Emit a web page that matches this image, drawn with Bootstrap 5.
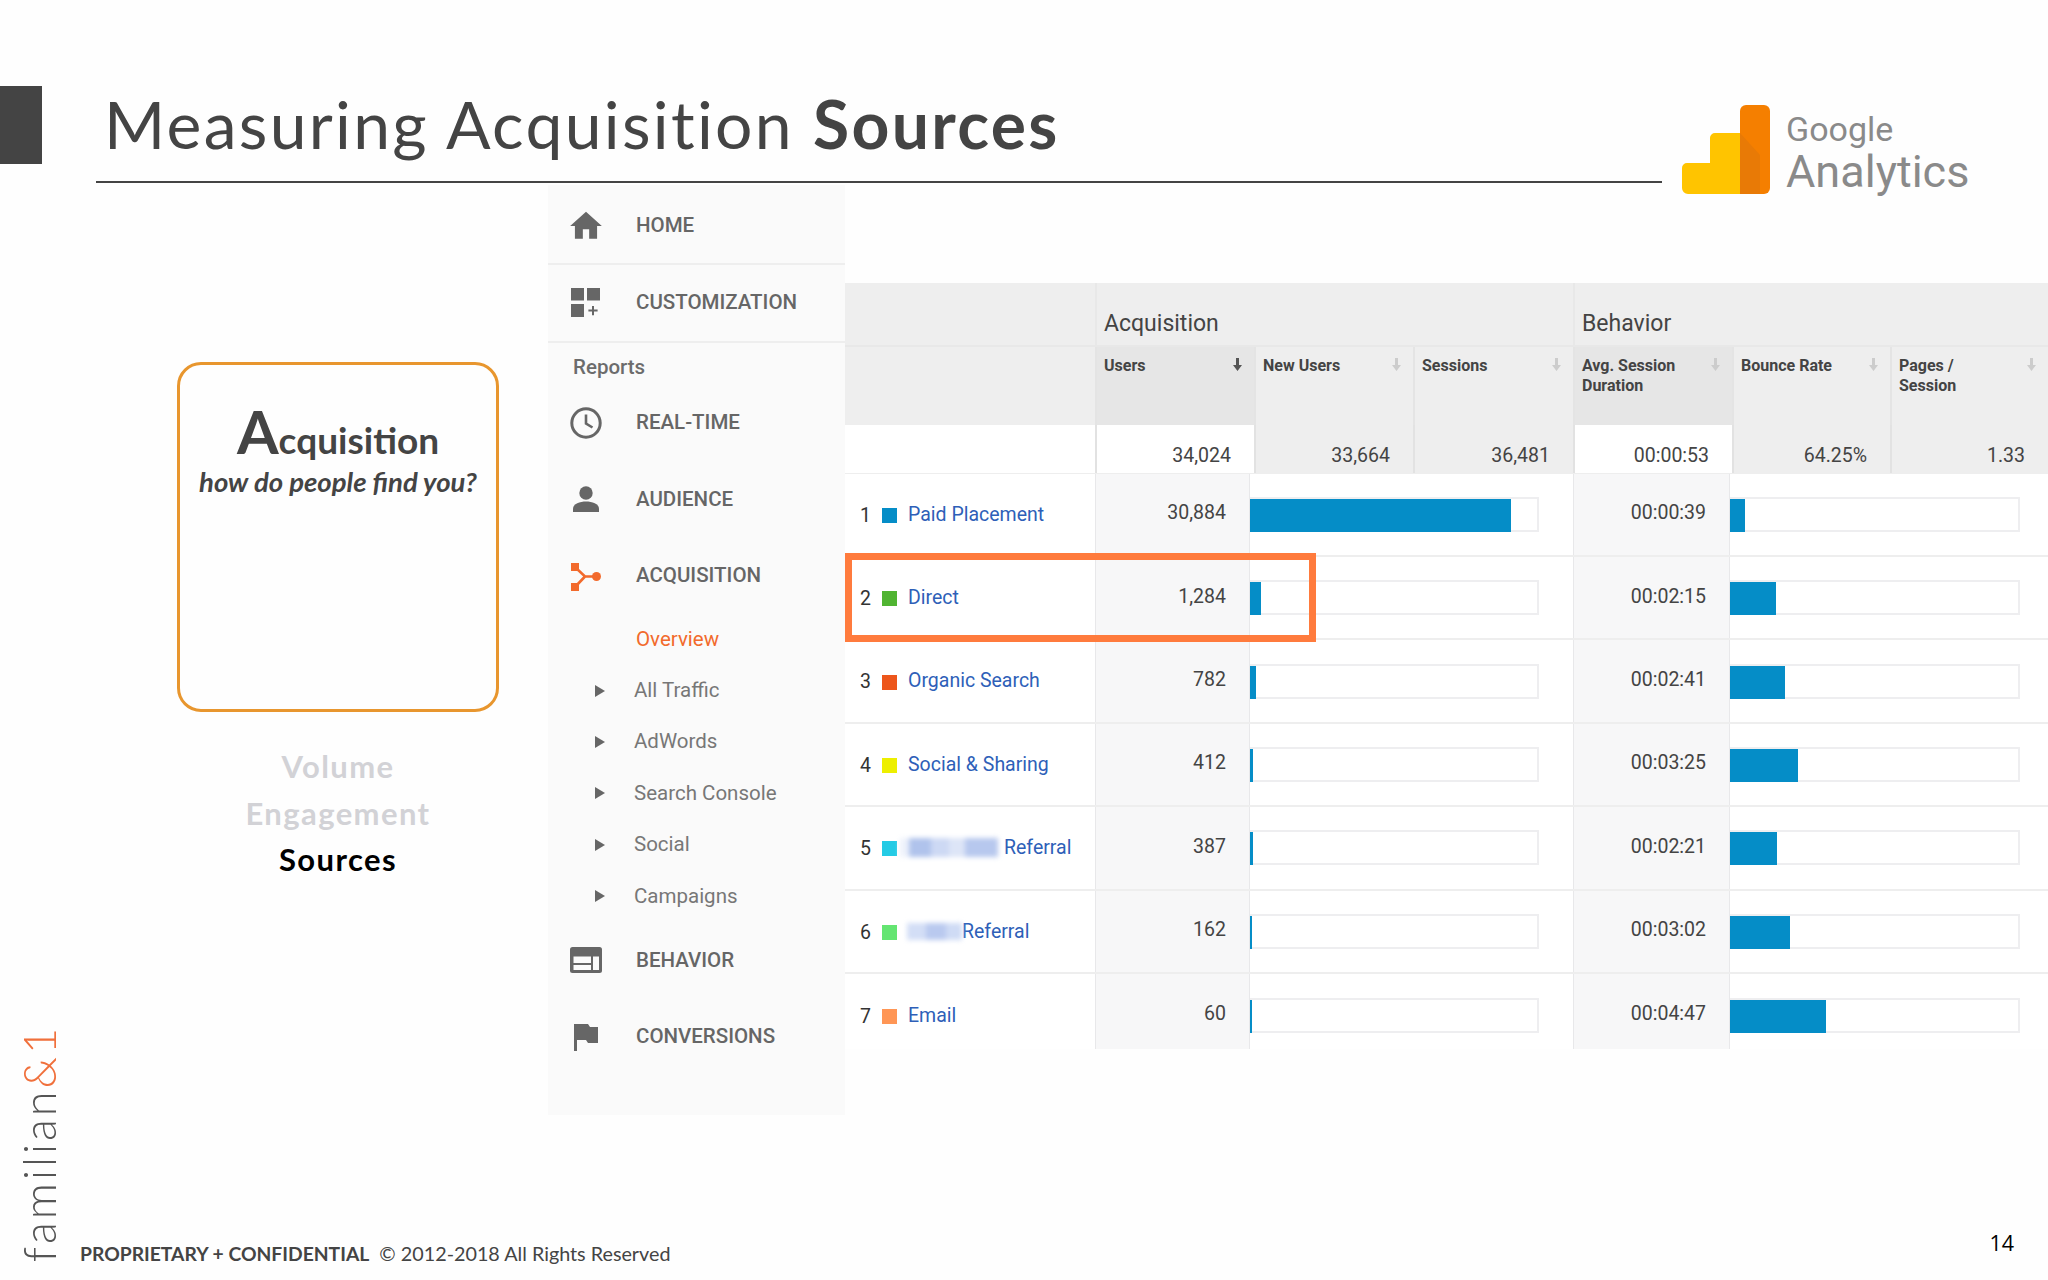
<!DOCTYPE html>
<html lang="en">
<head>
<meta charset="utf-8">
<title>Measuring Acquisition Sources</title>
<link href="https://cdn.jsdelivr.net/npm/bootstrap@5.3.0/dist/css/bootstrap.min.css" rel="stylesheet">
<style>
html,body{margin:0;height:1280px;width:2048px;overflow:hidden;background:#fefefe;}
.slide-strip{width:60px;height:1280px;padding-top:86px;padding-bottom:18px;}
.accent-bar{width:42px;height:78px;background:#444;}
.brand-v{writing-mode:vertical-rl;transform:rotate(180deg);font:300 45px/1 Lato,sans-serif;letter-spacing:3px;color:#555;margin-left:17px;white-space:nowrap;}
.brand-v span{color:#f0703c;}
.slide-main{width:1988px;height:1280px;}
.head-wrap{height:183px;padding-left:36px;}
.title-box{width:1566px;height:183px;border-bottom:2px solid #444;padding-left:8px;padding-top:84px;}
.title-box h1{margin:0;font:400 66px/80px Lato,sans-serif;letter-spacing:2.3px;color:#444;white-space:nowrap;}
.title-box b{font-weight:700;}
.ga-logo{margin-left:20px;margin-top:105px;height:100px;}
.ga-logo-text{margin-left:16px;color:#8a8a8a;font-family:Roboto,sans-serif;padding-top:5px;}
.ga-logo-g{font-size:34px;line-height:38px;letter-spacing:0;}
.ga-logo-a{font-size:45px;line-height:46px;letter-spacing:0;margin-top:1px;}
.left-col{width:488px;padding-top:179px;padding-left:117px;}
.acq-card{width:322px;height:350px;border:3px solid #e8962e;border-radius:24px;text-align:center;padding-top:35px;color:#444;}
.acq-word{font:700 37px/62px Lato,sans-serif;}
.acq-word span{font-size:60px;}
.acq-sub{font:italic 700 27.5px/30px Lato,sans-serif;margin-top:-4px;white-space:nowrap;}
.stage-list{width:322px;margin-top:31px;text-align:center;font:700 31px/46.5px Lato,sans-serif;letter-spacing:1.4px;color:#d2d2d6;}
.stage-on{color:#000;}
.ga-nav{width:297px;height:930px;margin-top:2px;padding-top:3.5px;background:#fafafa;font-family:Roboto,sans-serif;color:#666;}
.ga-item{height:76px;font-size:20.5px;font-weight:500;}
.ga-icon{width:76px;flex:none;}
.ga-icon svg{display:block;margin:0 auto;}
.ga-item-t{height:76px;border-bottom:2px solid #eee;}
.ga-item-t2{height:78px;border-bottom:2px solid #eee;}
.ga-txt{margin-left:12px;}
.ga-reports{height:42px;padding:12px 0 0 25px;font-size:20.5px;font-weight:500;line-height:24px;color:#6c6c6c;}
.ga-h77{height:77px;}
.ga-sub{height:51.35px;font-size:20.5px;color:#777;padding-left:47px;}
.ga-sub svg{width:10px;margin-right:29px;flex:none;}
.ga-sub-on{color:#f26a2c;}
.ga-sub-on span{margin-left:41px;}
.ga-table{width:1203px;margin-top:100px;height:765px;font-family:Roboto,sans-serif;}
.gt-group,.gt-head,.gt-total{display:grid;grid-template-columns:250px 159px 159px 160px 159px 158px 158px;}
.gt-group{height:64px;background:#eee;font-size:23px;color:#444;line-height:48px;border-bottom:2px solid #e8e8e8;}
.gt-group div{padding:17px 0 0 7px;}
.gt-g1{grid-column:2 / span 3;border-left:2px solid #e8e8e8;}
.gt-g2{grid-column:5 / span 3;border-left:2px solid #e8e8e8;}
.gt-head{height:78px;background:#eee;}
.gt-head>div{padding:9px 12px 0 7px;font-size:16px;line-height:20px;font-weight:700;color:#444;border-left:2px solid #e4e4e4;}
.gt-head>div:first-child{border:0;}
.gt-head>.gt-sorted{background:#e6e6e6;}
.gt-arrow{width:9px;height:13px;flex:none;margin-top:2px;}
.gt-total{height:48.5px;background:#eee;border-bottom:1px solid #eee;font-size:19.5px;line-height:24px;color:#444;text-align:right;}
.gt-total>div{padding:19px 23px 0 0;border-left:2px solid #e2e2e2;}
.gt-total>div:first-child{border:0;background:#fff;}
.gt-total>.gt-white{background:#fff;}
.gt-row{display:grid;grid-template-columns:250px 155px 323px 157px 318px;height:83.45px;border-bottom:2px solid #eee;background:#fff;font-size:19.5px;color:#444;}
.gt-row-last{border-bottom:0;height:75px;}
.gt-dim{padding-left:15px;color:#333;}
.gt-num{width:22px;margin-top:2px;}
.gt-sq{width:15px;height:15px;margin-right:11px;margin-top:2px;flex:none;}
.gt-dim a{color:#2e5fb8;text-decoration:none;white-space:nowrap;}
.gt-val{background:#f7f7f8;border-left:1px solid #e8e8ea;border-right:1px solid #e8e8ea;text-align:right;padding-right:23px;padding-bottom:3px;}
.gt-val2{padding-right:23px;}
.gt-bar-cell{padding-right:34px;}
.gt-bar-cell2{padding-right:28px;}
.gt-row-last .gt-bar-cell,.gt-row-last .gt-bar-cell2,.gt-row-last .gt-dim,.gt-row-last .gt-val{padding-top:7px;}
.gt-track{height:35px;width:100%;border:2px solid #eeeef0;border-left:0;border-radius:0;background:#fff;overflow:visible;}
.gt-track .progress-bar{background:#058dc7;height:33px;}
.gt-blur{height:19px;background:linear-gradient(90deg,#eef2fb 0 9%,#b0c3ec 9% 32%,#cdd9f4 32% 50%,#dde5f7 50% 66%,#b7c8ee 66% 100%);filter:blur(2.5px);margin-right:6px;flex:none;}
.gt-b5{width:98px;margin-left:3px;}
.gt-b6{width:55px;height:17px;margin-right:0;background:linear-gradient(90deg,#d3def6 0 35%,#b9c9ef 35% 70%,#cfdbf5 70% 100%);margin-left:-1px;}
.gt-highlight{position:absolute;left:0;top:270px;width:471px;height:89px;border:7px solid #ff7b3d;pointer-events:none;}
.foot-line{height:43px;padding-left:20px;padding-right:34px;}
.foot-txt{font:400 19.75px/1 Lato,sans-serif;color:#444;padding-top:7px;}
.foot-txt b{font-size:19.3px;font-weight:700;margin-right:5px;}
.page-no{font:400 21.5px/1 "Open Sans",sans-serif;color:#000;margin-top:-5px;}
</style>
</head>
<body>
<div class="d-flex">
  <div class="slide-strip d-flex flex-column justify-content-between flex-none">
    <div class="accent-bar"></div>
    <div class="brand-v">familian<span>&amp;1</span></div>
  </div>
  <div class="slide-main d-flex flex-column">
    <header class="head-wrap d-flex align-items-start">
      <div class="title-box"><h1>Measuring Acquisition <b>Sources</b></h1></div>
      <div class="ga-logo d-flex">
        <svg width="88" height="89" viewBox="0 0 88 89"><path fill="#ffc400" d="M5 58H28V33a5 5 0 0 1 5-5H58V89H6a6 6 0 0 1-6-6V63a5 5 0 0 1 5-5z"/><path fill="#f57f00" d="M58 6a6 6 0 0 1 6-6h18a6 6 0 0 1 6 6v77a6 6 0 0 1-6 6H58z"/><path fill="#e87a06" d="M58 28L78 50V89H58z"/></svg>
        <div class="ga-logo-text"><div class="ga-logo-g">Google</div><div class="ga-logo-a">Analytics</div></div>
      </div>
    </header>
    <div class="d-flex flex-grow-1">
      <section class="left-col">
        <div class="acq-card">
          <div class="acq-word"><span>A</span>cquisition</div>
          <div class="acq-sub">how do people find you?</div>
        </div>
        <div class="stage-list"><div>Volume</div><div>Engagement</div><div class="stage-on">Sources</div></div>
      </section>
      <nav class="ga-nav">
        <div class="ga-item ga-item-t d-flex align-items-center"><div class="ga-icon"><svg width="38" height="38" viewBox="0 0 24 24" fill="#666"><path d="M10 20v-6h4v6h5v-8h3L12 3 2 12h3v8z"/></svg></div><div class="ga-txt">HOME</div></div>
        <div class="ga-item ga-item-t2 d-flex align-items-center"><div class="ga-icon"><svg width="30" height="30" viewBox="0 0 30 30" fill="#666"><rect x="0" y="0" width="13" height="12.5"/><rect x="16" y="0" width="13" height="12.5"/><rect x="0" y="16" width="13" height="13"/><path d="M21 18h2v3.6h3.6v2H23v3.6h-2v-3.6h-3.6v-2H21z"/></svg></div><div class="ga-txt">CUSTOMIZATION</div></div>
        <div class="ga-reports">Reports</div>
        <div class="ga-item d-flex align-items-center"><div class="ga-icon"><svg width="32" height="32" viewBox="0 0 32 32" fill="none" stroke="#666"><circle cx="16" cy="16" r="14.2" stroke-width="3"/><path d="M16 7.5v9l6.5 4" stroke-width="2.6"/></svg></div><div class="ga-txt">REAL-TIME</div></div>
        <div class="ga-item ga-h77 d-flex align-items-center"><div class="ga-icon"><svg width="28" height="28" viewBox="0 0 28 28" fill="#666"><circle cx="14" cy="8" r="6.7"/><path d="M1 27v-3.5C1 19 8 16.5 14 16.5S27 19 27 23.5V27z"/></svg></div><div class="ga-txt">AUDIENCE</div></div>
        <div class="ga-item d-flex align-items-center"><div class="ga-icon"><svg width="30" height="30" viewBox="0 0 30 30"><rect x="0" y="2" width="8" height="8" fill="#f26a2c"/><rect x="0" y="22" width="8" height="8" fill="#f26a2c"/><circle cx="25.5" cy="15.5" r="4.5" fill="#f26a2c"/><path d="M5 7l9 8.5h10M5 25l9-9.5" fill="none" stroke="#f26a2c" stroke-width="2.6"/></svg></div><div class="ga-txt">ACQUISITION</div></div>
        <div class="ga-sub ga-sub-on d-flex align-items-center"><span>Overview</span></div>
        <div class="ga-sub d-flex align-items-center"><svg height="12" viewBox="0 0 10 12" fill="#666"><path d="M0 0l10 6-10 6z"/></svg><span>All Traffic</span></div>
        <div class="ga-sub d-flex align-items-center"><svg height="12" viewBox="0 0 10 12" fill="#666"><path d="M0 0l10 6-10 6z"/></svg><span>AdWords</span></div>
        <div class="ga-sub d-flex align-items-center"><svg height="12" viewBox="0 0 10 12" fill="#666"><path d="M0 0l10 6-10 6z"/></svg><span>Search Console</span></div>
        <div class="ga-sub d-flex align-items-center"><svg height="12" viewBox="0 0 10 12" fill="#666"><path d="M0 0l10 6-10 6z"/></svg><span>Social</span></div>
        <div class="ga-sub d-flex align-items-center"><svg height="12" viewBox="0 0 10 12" fill="#666"><path d="M0 0l10 6-10 6z"/></svg><span>Campaigns</span></div>
        <div class="ga-item ga-h77 d-flex align-items-center"><div class="ga-icon"><svg width="32" height="26" viewBox="0 0 32 26"><rect width="32" height="26" rx="2.5" fill="#666"/><rect x="3.5" y="9.5" width="17.5" height="6.5" fill="#fafafa"/><rect x="3.5" y="18" width="17.5" height="5" fill="#fafafa"/><rect x="23" y="9.5" width="6" height="13.5" fill="#fafafa"/></svg></div><div class="ga-txt">BEHAVIOR</div></div>
        <div class="ga-item d-flex align-items-center"><div class="ga-icon"><svg width="26" height="28" viewBox="0 0 26 28" fill="#666"><path d="M1 1h3v27H1z"/><path d="M4 1h11l2 3h8v16H15l-2-3H4z"/></svg></div><div class="ga-txt">CONVERSIONS</div></div>
      </nav>
      <section class="ga-table position-relative">
        <div class="gt-group"><div></div><div class="gt-g1">Acquisition</div><div class="gt-g2">Behavior</div></div>
        <div class="gt-head">
          <div></div>
          <div class="gt-sorted d-flex justify-content-between"><span>Users</span><svg class="gt-arrow" viewBox="0 0 9 13" fill="#555"><path d="M3 0h3v7h3l-4.5 6L0 7h3z"/></svg></div>
          <div class="d-flex justify-content-between"><span>New Users</span><svg class="gt-arrow" viewBox="0 0 9 13" fill="#ccc"><path d="M3 0h3v7h3l-4.5 6L0 7h3z"/></svg></div>
          <div class="d-flex justify-content-between"><span>Sessions</span><svg class="gt-arrow" viewBox="0 0 9 13" fill="#ccc"><path d="M3 0h3v7h3l-4.5 6L0 7h3z"/></svg></div>
          <div class="gt-sorted d-flex justify-content-between"><span>Avg. Session<br>Duration</span><svg class="gt-arrow" viewBox="0 0 9 13" fill="#ccc"><path d="M3 0h3v7h3l-4.5 6L0 7h3z"/></svg></div>
          <div class="d-flex justify-content-between"><span>Bounce Rate</span><svg class="gt-arrow" viewBox="0 0 9 13" fill="#ccc"><path d="M3 0h3v7h3l-4.5 6L0 7h3z"/></svg></div>
          <div class="d-flex justify-content-between"><span>Pages /<br>Session</span><svg class="gt-arrow" viewBox="0 0 9 13" fill="#ccc"><path d="M3 0h3v7h3l-4.5 6L0 7h3z"/></svg></div>
        </div>
        <div class="gt-total">
          <div></div><div class="gt-white">34,024</div><div>33,664</div><div>36,481</div><div class="gt-white">00:00:53</div><div>64.25%</div><div>1.33</div>
        </div>
        <div class="gt-row">
          <div class="gt-dim d-flex align-items-center"><span class="gt-num">1</span><span class="gt-sq" style="background:#058dc7"></span><a href="#">Paid Placement</a></div>
          <div class="gt-val d-flex align-items-center justify-content-end">30,884</div>
          <div class="gt-bar-cell d-flex align-items-center"><div class="progress gt-track"><div class="progress-bar" style="width:261px"></div></div></div>
          <div class="gt-val gt-val2 d-flex align-items-center justify-content-end">00:00:39</div>
          <div class="gt-bar-cell2 d-flex align-items-center"><div class="progress gt-track"><div class="progress-bar" style="width:15px"></div></div></div>
        </div>
        <div class="gt-row">
          <div class="gt-dim d-flex align-items-center"><span class="gt-num">2</span><span class="gt-sq" style="background:#50b432"></span><a href="#">Direct</a></div>
          <div class="gt-val d-flex align-items-center justify-content-end">1,284</div>
          <div class="gt-bar-cell d-flex align-items-center"><div class="progress gt-track"><div class="progress-bar" style="width:11px"></div></div></div>
          <div class="gt-val gt-val2 d-flex align-items-center justify-content-end">00:02:15</div>
          <div class="gt-bar-cell2 d-flex align-items-center"><div class="progress gt-track"><div class="progress-bar" style="width:46px"></div></div></div>
        </div>
        <div class="gt-row">
          <div class="gt-dim d-flex align-items-center"><span class="gt-num">3</span><span class="gt-sq" style="background:#ed561b"></span><a href="#">Organic Search</a></div>
          <div class="gt-val d-flex align-items-center justify-content-end">782</div>
          <div class="gt-bar-cell d-flex align-items-center"><div class="progress gt-track"><div class="progress-bar" style="width:6px"></div></div></div>
          <div class="gt-val gt-val2 d-flex align-items-center justify-content-end">00:02:41</div>
          <div class="gt-bar-cell2 d-flex align-items-center"><div class="progress gt-track"><div class="progress-bar" style="width:55px"></div></div></div>
        </div>
        <div class="gt-row">
          <div class="gt-dim d-flex align-items-center"><span class="gt-num">4</span><span class="gt-sq" style="background:#edef00"></span><a href="#">Social &amp; Sharing</a></div>
          <div class="gt-val d-flex align-items-center justify-content-end">412</div>
          <div class="gt-bar-cell d-flex align-items-center"><div class="progress gt-track"><div class="progress-bar" style="width:3px"></div></div></div>
          <div class="gt-val gt-val2 d-flex align-items-center justify-content-end">00:03:25</div>
          <div class="gt-bar-cell2 d-flex align-items-center"><div class="progress gt-track"><div class="progress-bar" style="width:68px"></div></div></div>
        </div>
        <div class="gt-row">
          <div class="gt-dim d-flex align-items-center"><span class="gt-num">5</span><span class="gt-sq" style="background:#24cbe5;margin-right:0"></span><span class="gt-blur gt-b5"></span><a href="#">Referral</a></div>
          <div class="gt-val d-flex align-items-center justify-content-end">387</div>
          <div class="gt-bar-cell d-flex align-items-center"><div class="progress gt-track"><div class="progress-bar" style="width:3px"></div></div></div>
          <div class="gt-val gt-val2 d-flex align-items-center justify-content-end">00:02:21</div>
          <div class="gt-bar-cell2 d-flex align-items-center"><div class="progress gt-track"><div class="progress-bar" style="width:47px"></div></div></div>
        </div>
        <div class="gt-row">
          <div class="gt-dim d-flex align-items-center"><span class="gt-num">6</span><span class="gt-sq" style="background:#64e572"></span><span class="gt-blur gt-b6"></span><a href="#">Referral</a></div>
          <div class="gt-val d-flex align-items-center justify-content-end">162</div>
          <div class="gt-bar-cell d-flex align-items-center"><div class="progress gt-track"><div class="progress-bar" style="width:2px"></div></div></div>
          <div class="gt-val gt-val2 d-flex align-items-center justify-content-end">00:03:02</div>
          <div class="gt-bar-cell2 d-flex align-items-center"><div class="progress gt-track"><div class="progress-bar" style="width:60px"></div></div></div>
        </div>
        <div class="gt-row gt-row-last">
          <div class="gt-dim d-flex align-items-center"><span class="gt-num">7</span><span class="gt-sq" style="background:#ff9655"></span><a href="#">Email</a></div>
          <div class="gt-val d-flex align-items-center justify-content-end">60</div>
          <div class="gt-bar-cell d-flex align-items-center"><div class="progress gt-track"><div class="progress-bar" style="width:2px"></div></div></div>
          <div class="gt-val gt-val2 d-flex align-items-center justify-content-end">00:04:47</div>
          <div class="gt-bar-cell2 d-flex align-items-center"><div class="progress gt-track"><div class="progress-bar" style="width:96px"></div></div></div>
        </div>
        <div class="gt-highlight"></div>
      </section>
    </div>
    <footer class="foot-line d-flex justify-content-between">
      <div class="foot-txt"><b>PROPRIETARY + CONFIDENTIAL</b> © 2012-2018 All Rights Reserved</div>
      <div class="page-no">14</div>
    </footer>
  </div>
</div>
<script src="https://cdn.jsdelivr.net/npm/bootstrap@5.3.0/dist/js/bootstrap.bundle.min.js"></script>
</body>
</html>
